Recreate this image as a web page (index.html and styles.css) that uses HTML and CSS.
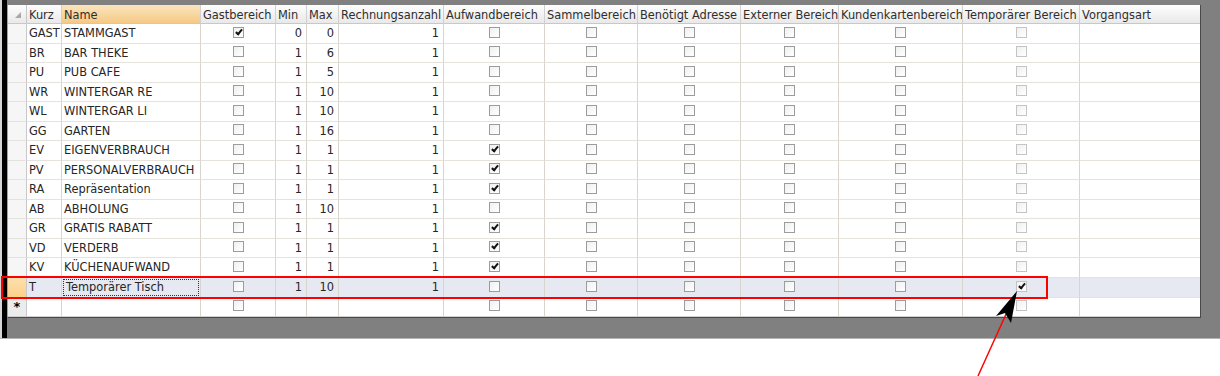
FILE: index.html
```html
<!DOCTYPE html>
<html lang="de">
<head>
    <meta charset="UTF-8">
    <title>Bereiche</title>
    <link rel="stylesheet" href="styles.css">
</head>
<body>
    <div class="frame">
        <div class="edge"></div>
        <div class="bar"></div>
        <div class="pane">
            <table class="grid">
                <thead>
                    <tr>
                        <th class="rh w-rh"><span class="corner"></span></th>
                        <th class="w-kurz">Kurz</th>
                        <th class="w-name sorted">Name</th>
                        <th class="w-gast">Gastbereich</th>
                        <th class="w-min">Min</th>
                        <th class="w-max">Max</th>
                        <th class="w-re">Rechnungsanzahl</th>
                        <th class="w-auf">Aufwandbereich</th>
                        <th class="w-sam">Sammelbereich</th>
                        <th class="w-adr">Benötigt Adresse</th>
                        <th class="w-ext">Externer Bereich</th>
                        <th class="w-kk">Kundenkartenbereich</th>
                        <th class="w-tmp">Temporärer Bereich</th>
                        <th class="w-vg">Vorgangsart</th>
                    </tr>
                </thead>
                <tbody>
                    <tr>
                        <td class="rh"></td><td>GAST</td><td>STAMMGAST</td>
                        <td class="c"><span class="cb on"></span></td><td class="n">0</td><td class="n">0</td><td class="n">1</td>
                        <td class="c"><span class="cb"></span></td><td class="c"><span class="cb"></span></td><td class="c"><span class="cb"></span></td>
                        <td class="c"><span class="cb"></span></td><td class="c"><span class="cb"></span></td><td class="c"><span class="cb ro"></span></td><td></td>
                    </tr>
                    <tr>
                        <td class="rh"></td><td>BR</td><td>BAR THEKE</td>
                        <td class="c"><span class="cb"></span></td><td class="n">1</td><td class="n">6</td><td class="n">1</td>
                        <td class="c"><span class="cb"></span></td><td class="c"><span class="cb"></span></td><td class="c"><span class="cb"></span></td>
                        <td class="c"><span class="cb"></span></td><td class="c"><span class="cb"></span></td><td class="c"><span class="cb ro"></span></td><td></td>
                    </tr>
                    <tr>
                        <td class="rh"></td><td>PU</td><td>PUB CAFE</td>
                        <td class="c"><span class="cb"></span></td><td class="n">1</td><td class="n">5</td><td class="n">1</td>
                        <td class="c"><span class="cb"></span></td><td class="c"><span class="cb"></span></td><td class="c"><span class="cb"></span></td>
                        <td class="c"><span class="cb"></span></td><td class="c"><span class="cb"></span></td><td class="c"><span class="cb ro"></span></td><td></td>
                    </tr>
                    <tr>
                        <td class="rh"></td><td>WR</td><td>WINTERGAR RE</td>
                        <td class="c"><span class="cb"></span></td><td class="n">1</td><td class="n">10</td><td class="n">1</td>
                        <td class="c"><span class="cb"></span></td><td class="c"><span class="cb"></span></td><td class="c"><span class="cb"></span></td>
                        <td class="c"><span class="cb"></span></td><td class="c"><span class="cb"></span></td><td class="c"><span class="cb ro"></span></td><td></td>
                    </tr>
                    <tr>
                        <td class="rh"></td><td>WL</td><td>WINTERGAR LI</td>
                        <td class="c"><span class="cb"></span></td><td class="n">1</td><td class="n">10</td><td class="n">1</td>
                        <td class="c"><span class="cb"></span></td><td class="c"><span class="cb"></span></td><td class="c"><span class="cb"></span></td>
                        <td class="c"><span class="cb"></span></td><td class="c"><span class="cb"></span></td><td class="c"><span class="cb ro"></span></td><td></td>
                    </tr>
                    <tr>
                        <td class="rh"></td><td>GG</td><td>GARTEN</td>
                        <td class="c"><span class="cb"></span></td><td class="n">1</td><td class="n">16</td><td class="n">1</td>
                        <td class="c"><span class="cb"></span></td><td class="c"><span class="cb"></span></td><td class="c"><span class="cb"></span></td>
                        <td class="c"><span class="cb"></span></td><td class="c"><span class="cb"></span></td><td class="c"><span class="cb ro"></span></td><td></td>
                    </tr>
                    <tr>
                        <td class="rh"></td><td>EV</td><td>EIGENVERBRAUCH</td>
                        <td class="c"><span class="cb"></span></td><td class="n">1</td><td class="n">1</td><td class="n">1</td>
                        <td class="c"><span class="cb on"></span></td><td class="c"><span class="cb"></span></td><td class="c"><span class="cb"></span></td>
                        <td class="c"><span class="cb"></span></td><td class="c"><span class="cb"></span></td><td class="c"><span class="cb ro"></span></td><td></td>
                    </tr>
                    <tr>
                        <td class="rh"></td><td>PV</td><td>PERSONALVERBRAUCH</td>
                        <td class="c"><span class="cb"></span></td><td class="n">1</td><td class="n">1</td><td class="n">1</td>
                        <td class="c"><span class="cb on"></span></td><td class="c"><span class="cb"></span></td><td class="c"><span class="cb"></span></td>
                        <td class="c"><span class="cb"></span></td><td class="c"><span class="cb"></span></td><td class="c"><span class="cb ro"></span></td><td></td>
                    </tr>
                    <tr>
                        <td class="rh"></td><td>RA</td><td>Repräsentation</td>
                        <td class="c"><span class="cb"></span></td><td class="n">1</td><td class="n">1</td><td class="n">1</td>
                        <td class="c"><span class="cb on"></span></td><td class="c"><span class="cb"></span></td><td class="c"><span class="cb"></span></td>
                        <td class="c"><span class="cb"></span></td><td class="c"><span class="cb"></span></td><td class="c"><span class="cb ro"></span></td><td></td>
                    </tr>
                    <tr>
                        <td class="rh"></td><td>AB</td><td>ABHOLUNG</td>
                        <td class="c"><span class="cb"></span></td><td class="n">1</td><td class="n">10</td><td class="n">1</td>
                        <td class="c"><span class="cb"></span></td><td class="c"><span class="cb"></span></td><td class="c"><span class="cb"></span></td>
                        <td class="c"><span class="cb"></span></td><td class="c"><span class="cb"></span></td><td class="c"><span class="cb ro"></span></td><td></td>
                    </tr>
                    <tr>
                        <td class="rh"></td><td>GR</td><td>GRATIS RABATT</td>
                        <td class="c"><span class="cb"></span></td><td class="n">1</td><td class="n">1</td><td class="n">1</td>
                        <td class="c"><span class="cb on"></span></td><td class="c"><span class="cb"></span></td><td class="c"><span class="cb"></span></td>
                        <td class="c"><span class="cb"></span></td><td class="c"><span class="cb"></span></td><td class="c"><span class="cb ro"></span></td><td></td>
                    </tr>
                    <tr>
                        <td class="rh"></td><td>VD</td><td>VERDERB</td>
                        <td class="c"><span class="cb"></span></td><td class="n">1</td><td class="n">1</td><td class="n">1</td>
                        <td class="c"><span class="cb on"></span></td><td class="c"><span class="cb"></span></td><td class="c"><span class="cb"></span></td>
                        <td class="c"><span class="cb"></span></td><td class="c"><span class="cb"></span></td><td class="c"><span class="cb ro"></span></td><td></td>
                    </tr>
                    <tr>
                        <td class="rh"></td><td>KV</td><td>KÜCHENAUFWAND</td>
                        <td class="c"><span class="cb"></span></td><td class="n">1</td><td class="n">1</td><td class="n">1</td>
                        <td class="c"><span class="cb on"></span></td><td class="c"><span class="cb"></span></td><td class="c"><span class="cb"></span></td>
                        <td class="c"><span class="cb"></span></td><td class="c"><span class="cb"></span></td><td class="c"><span class="cb ro"></span></td><td></td>
                    </tr>
                    <tr class="selected">
                        <td class="rh"></td><td>T</td><td class="focus"><span>Temporärer Tisch</span></td>
                        <td class="c"><span class="cb"></span></td><td class="n">1</td><td class="n">10</td><td class="n">1</td>
                        <td class="c"><span class="cb"></span></td><td class="c"><span class="cb"></span></td><td class="c"><span class="cb"></span></td>
                        <td class="c"><span class="cb"></span></td><td class="c"><span class="cb"></span></td><td class="c"><span class="cb ro on"></span></td><td></td>
                    </tr>
                    <tr class="newrow">
                        <td class="rh">*</td><td></td><td></td>
                        <td class="c"><span class="cb"></span></td><td></td><td></td><td></td>
                        <td class="c"><span class="cb"></span></td><td class="c"><span class="cb"></span></td><td class="c"><span class="cb"></span></td>
                        <td class="c"><span class="cb"></span></td><td class="c"><span class="cb"></span></td><td class="c"><span class="cb ro"></span></td><td></td>
                    </tr>
                </tbody>
            </table>
        </div>
    </div>

    <div class="mark"></div>
    <svg class="arrow" width="60" height="100" viewBox="970 285 60 100">
        <line x1="978" y1="376" x2="1007" y2="312" stroke="#f00" stroke-width="1.5"/>
        <polygon points="1017,291 996,316 1005,313 1011,323" fill="#000"/>
    </svg>
</body>
</html>
```

FILE: styles.css
```css
body {
    margin: 0;
    background: #fff;
    font-family: "DejaVu Sans", Verdana, sans-serif;
    font-size: 11.4px;
    color: #262626;
}
.frame {
    display: flex;
    height: 338px;
    border-bottom: 1px solid #b4b4b4;
}
.edge { width: 2px; background: #d6d6d6; }
.bar { width: 5px; background: #000; }
.pane {
    flex: 1;
    background: #808080;
    padding: 5px 18px 0 0;
}
.grid {
    border-collapse: separate;
    border-spacing: 0;
    table-layout: fixed;
    width: 1194px;
    background: #fff;
    border-left: 1px solid #a0a0a0;
    border-right: 1px solid #4a4a4a;
    border-bottom: 1px solid #4a4a4a;
    box-shadow: inset 0 -1px 0 #d8d8d8;
}
.grid th, .grid td {
    box-sizing: border-box;
    padding: 1px 2px 0;
    white-space: nowrap;
    overflow: hidden;
    border-right: 1px solid #d9d5cd;
    border-bottom: 1px solid #e6e3dd;
    height: 19.5px;
    line-height: 17px;
}
.grid th {
    height: 19px;
    padding-top: 2px;
    line-height: 16px;
    font-weight: normal;
    text-align: left;
    color: #2e2e2e;
    background: linear-gradient(#fdfdfd, #e9e9e9);
    border-right: 1px solid #d0d0d0;
    border-bottom: 1px solid #c8c8c8;
}
.grid th.sorted { background: linear-gradient(#fbe5bd, #f6c985); }
.grid th:last-child, .grid td:last-child { border-right: none; }

.w-rh { width: 19px; }
.w-kurz { width: 35px; }
.w-name { width: 139px; }
.w-gast { width: 75px; }
.w-min { width: 31px; }
.w-max { width: 32px; }
.w-re { width: 105px; }
.w-auf { width: 101px; }
.w-sam { width: 93px; }
.w-adr { width: 103px; }
.w-ext { width: 98px; }
.w-kk { width: 124px; }
.w-tmp { width: 117px; }
.w-vg { width: 120px; }

.grid .rh {
    background: #f6f6f6;
    border-right: 1px solid #c8c8c8;
    padding: 0;
    text-align: center;
}
.grid th.rh { background: linear-gradient(#fdfdfd, #e9e9e9); position: relative; }
.corner {
    position: absolute;
    right: 5px;
    bottom: 5px;
    width: 0;
    height: 0;
    border-left: 6px solid transparent;
    border-bottom: 6px solid #a8a8a8;
}
.grid td.n { text-align: right; padding-right: 4px; }
.grid td.c { text-align: center; padding: 0; }

.cb {
    display: inline-block;
    position: relative;
    width: 9px;
    height: 9px;
    border: 1px solid #9c9c9c;
    background: linear-gradient(135deg, #f0f0f0, #fff);
    vertical-align: middle;
    margin-top: -2px;
}
.cb.ro { border-color: #c4c4c4; }
.cb.on::after {
    content: "";
    position: absolute;
    left: 3px;
    top: 0;
    width: 2px;
    height: 5px;
    border-right: 2px solid #111;
    border-bottom: 2px solid #111;
    transform: rotate(40deg);
}

.selected td { background: #e6e8f2; }
.grid .selected td.rh { background: linear-gradient(#fde0ac, #fbd08a); }
.grid td.focus { padding: 1px 1px; }
.focus span {
    display: block;
    border: 1px dotted #333;
    line-height: 15px;
    padding: 0 2px;
}
.newrow td { border-bottom: 1px solid #cfcfcf; }
.grid .newrow td.rh { font-weight: bold; font-size: 13px; color: #000; background: #ececec; }

.mark {
    position: absolute;
    left: 1px;
    top: 276px;
    width: 1047px;
    height: 23px;
    border: 2px solid #f00;
    box-sizing: border-box;
}
.arrow {
    position: absolute;
    left: 970px;
    top: 285px;
}
```
